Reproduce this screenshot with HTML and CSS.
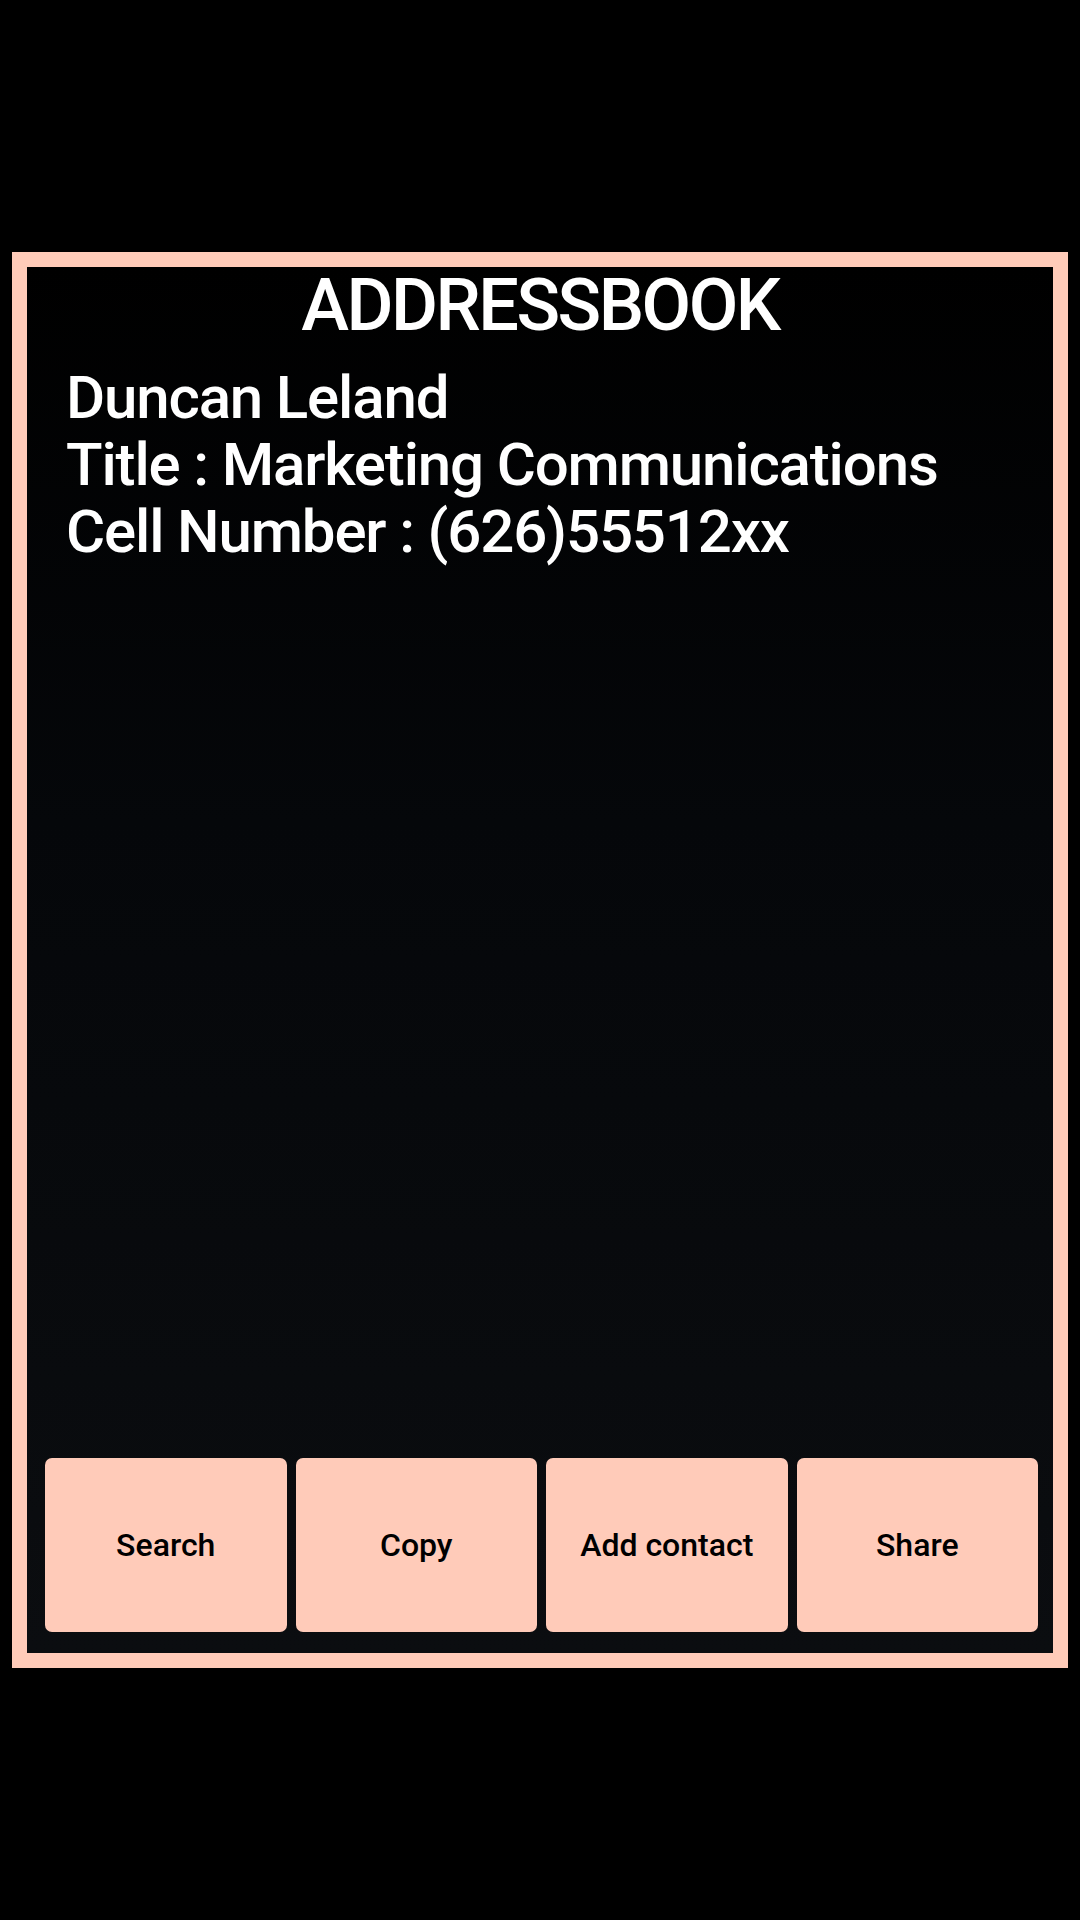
FILE: index.html
```html
<!DOCTYPE html>
<html lang="en">
<head>
<meta charset="utf-8">
<title>Addressbook</title>
<link rel="stylesheet" href="styles.css">
</head>
<body>
<div class="frame">
  <h1 class="title">ADDRESSBOOK</h1>
  <div class="info">
    <div class="line">Duncan Leland</div>
    <div class="line">Title : Marketing Communications</div>
    <div class="line">Cell Number : (626)55512xx</div>
  </div>
  <div class="spacer"></div>
  <div class="actions">
    <button class="btn">Search</button>
    <button class="btn">Copy</button>
    <button class="btn">Add contact</button>
    <button class="btn">Share</button>
  </div>
</div>
</body>
</html>
```

FILE: styles.css
```css
html, body {
  margin: 0;
  padding: 0;
  background: #000;
}
body {
  width: 1080px;
  height: 1920px;
  font-family: Roboto, "Noto Sans", "Liberation Sans", sans-serif;
  color: #fff;
  padding-top: 252px;
  box-sizing: border-box;
}
.frame {
  box-sizing: border-box;
  margin-left: 12px;
  width: 1056px;
  height: 1416px;
  border: 15px solid #ffcbb9;
  background: linear-gradient(to bottom, #000 0%, #05070a 40%, #0b0d10 100%);
  display: flex;
  flex-direction: column;
  padding-top: 3px;
}
.title {
  margin: 0;
  font-size: 72px;
  line-height: 72px;
  font-weight: 500;
  letter-spacing: -2.5px;
  text-align: center;
}
.info {
  margin-top: 22px;
  padding-left: 39px;
  font-size: 60px;
  line-height: 67px;
  font-weight: 500;
  letter-spacing: -1.15px;
}
.spacer {
  flex: 1;
}
.actions {
  display: grid;
  grid-template-columns: repeat(4, 241.5px);
  gap: 9px;
  padding: 0 15px 21px 18px;
}
.btn {
  height: 174px;
  border: none;
  border-radius: 7px;
  background: #ffcbb9;
  color: #000;
  font-family: Roboto, "Noto Sans", "Liberation Sans", sans-serif;
  font-size: 32px;
  font-weight: 500;
  letter-spacing: 0;
  padding: 0;
}
```
